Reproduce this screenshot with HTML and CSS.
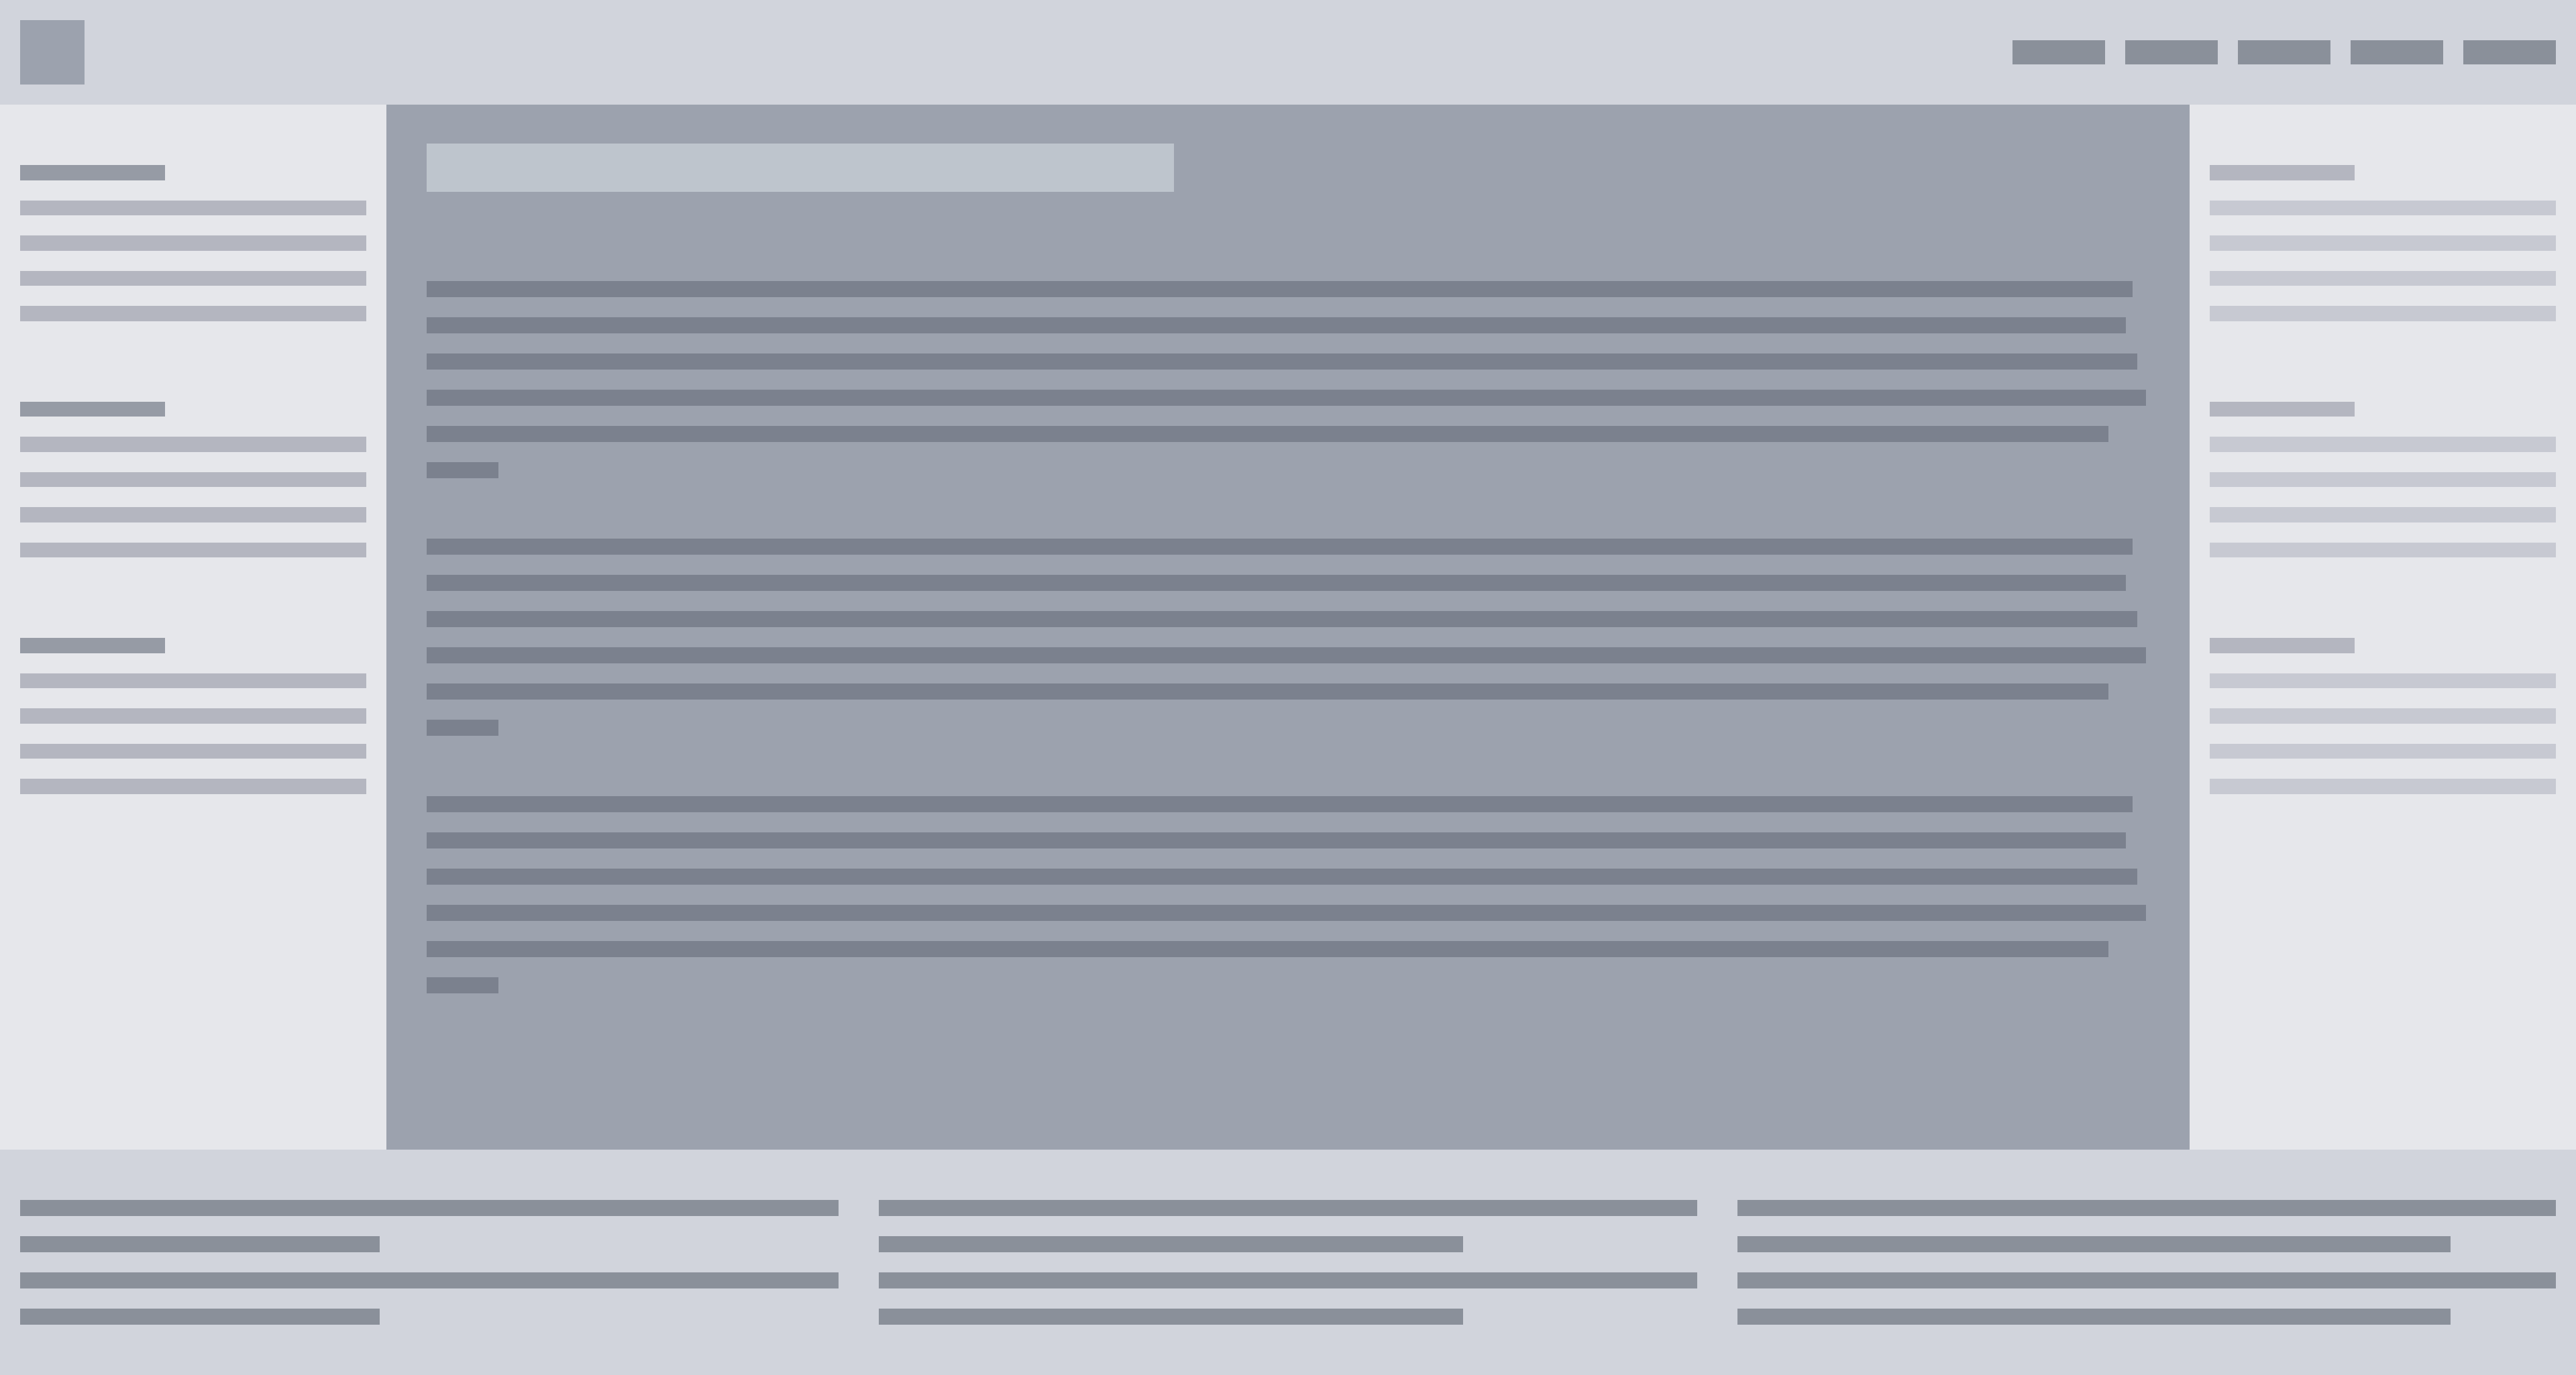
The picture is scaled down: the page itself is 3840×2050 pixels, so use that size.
FILE: index.html
```html
<!DOCTYPE html>
<html lang="en">
<head>
<meta charset="utf-8">
<title>Layout</title>
<link rel="stylesheet" href="styles.css">
</head>
<body>
<div class="page">
  <header class="topbar">
    <div class="logo"></div>
    <nav class="nav">
      <span class="nav-item"></span>
      <span class="nav-item"></span>
      <span class="nav-item"></span>
      <span class="nav-item"></span>
      <span class="nav-item"></span>
    </nav>
  </header>

  <div class="middle">
    <aside class="sidebar sidebar-left">
      <div class="group">
        <div class="group-title"></div>
        <div class="group-line"></div>
        <div class="group-line"></div>
        <div class="group-line"></div>
        <div class="group-line"></div>
      </div>
      <div class="group">
        <div class="group-title"></div>
        <div class="group-line"></div>
        <div class="group-line"></div>
        <div class="group-line"></div>
        <div class="group-line"></div>
      </div>
      <div class="group">
        <div class="group-title"></div>
        <div class="group-line"></div>
        <div class="group-line"></div>
        <div class="group-line"></div>
        <div class="group-line"></div>
      </div>
    </aside>

    <main class="content">
      <div class="content-title"></div>
      <div class="paragraphs">
        <div class="para">
          <div class="para-line"></div>
          <div class="para-line"></div>
          <div class="para-line"></div>
          <div class="para-line"></div>
          <div class="para-line"></div>
          <div class="para-line"></div>
        </div>
        <div class="para">
          <div class="para-line"></div>
          <div class="para-line"></div>
          <div class="para-line"></div>
          <div class="para-line"></div>
          <div class="para-line"></div>
          <div class="para-line"></div>
        </div>
        <div class="para">
          <div class="para-line"></div>
          <div class="para-line"></div>
          <div class="para-line"></div>
          <div class="para-line"></div>
          <div class="para-line"></div>
          <div class="para-line"></div>
        </div>
      </div>
    </main>

    <aside class="sidebar sidebar-right">
      <div class="group">
        <div class="group-title"></div>
        <div class="group-line"></div>
        <div class="group-line"></div>
        <div class="group-line"></div>
        <div class="group-line"></div>
      </div>
      <div class="group">
        <div class="group-title"></div>
        <div class="group-line"></div>
        <div class="group-line"></div>
        <div class="group-line"></div>
        <div class="group-line"></div>
      </div>
      <div class="group">
        <div class="group-title"></div>
        <div class="group-line"></div>
        <div class="group-line"></div>
        <div class="group-line"></div>
        <div class="group-line"></div>
      </div>
    </aside>
  </div>

  <footer class="footer">
    <div class="fcol fcol-1">
      <div class="fline"></div>
      <div class="fline fline-short"></div>
      <div class="fline"></div>
      <div class="fline fline-short"></div>
    </div>
    <div class="fcol fcol-2">
      <div class="fline"></div>
      <div class="fline fline-short"></div>
      <div class="fline"></div>
      <div class="fline fline-short"></div>
    </div>
    <div class="fcol fcol-3">
      <div class="fline"></div>
      <div class="fline fline-short"></div>
      <div class="fline"></div>
      <div class="fline fline-short"></div>
    </div>
  </footer>
</div>
</body>
</html>
```

FILE: styles.css
```css
* {
  box-sizing: border-box;
}

html, body {
  margin: 0;
  padding: 0;
  height: 100%;
  font-family: "Liberation Sans", Arial, sans-serif;
}

.page {
  display: flex;
  flex-direction: column;
  height: 100vh;
  min-height: 2050px;
}

/* Header */
.topbar {
  flex: 0 0 156px;
  height: 156px;
  background: #d1d4dc;
  padding: 30px;
  display: flex;
  align-items: center;
  justify-content: space-between;
}

.logo {
  width: 96px;
  height: 96px;
  background: #9ca2ae;
}

.nav {
  display: flex;
  gap: 30px;
}

.nav-item {
  display: block;
  width: 138px;
  height: 36px;
  background: #8a909a;
}

/* Middle */
.middle {
  flex: 1 1 auto;
  display: flex;
  min-height: 0;
}

.sidebar {
  flex: 0 0 576px;
  width: 576px;
  background: #e6e7eb;
  padding: 90px 30px;
  display: flex;
  flex-direction: column;
  gap: 120px;
}

.group {
  display: flex;
  flex-direction: column;
  gap: 30px;
}

.group-title {
  width: 216px;
  height: 22.5px;
}

.group-line {
  width: 100%;
  height: 22.5px;
}

.sidebar-left .group-title {
  background: #969ba5;
}

.sidebar-left .group-line {
  background: #b4b6c0;
}

.sidebar-right .group-title {
  background: #b4b6c0;
}

.sidebar-right .group-line {
  background: #c7c9d2;
}

.content {
  flex: 1 1 auto;
  background: #9ca2ae;
  padding: 58px 60px;
}

.content-title {
  width: 1114px;
  height: 72px;
  background: #bec5cd;
  margin-bottom: 133px;
}

.paragraphs {
  display: flex;
  flex-direction: column;
  gap: 90px;
}

.para {
  display: flex;
  flex-direction: column;
  gap: 30px;
}

.para-line {
  height: 24px;
  background: #7b818e;
}

.para-line:nth-child(1) { width: 2543px; }
.para-line:nth-child(2) { width: 2533px; }
.para-line:nth-child(3) { width: 2550px; }
.para-line:nth-child(4) { width: 2563px; }
.para-line:nth-child(5) { width: 2507px; }
.para-line:nth-child(6) { width: 107px; }

/* Footer */
.footer {
  flex: 0 0 336px;
  height: 336px;
  background: #d1d4dc;
  padding: 75px 30px;
  display: grid;
  grid-template-columns: repeat(3, 1fr);
  column-gap: 60px;
}

.fcol {
  display: flex;
  flex-direction: column;
  gap: 30px;
}

.fline {
  height: 24px;
  width: 100%;
  background: #8a909a;
}

.fcol-1 .fline-short { width: 536px; }
.fcol-2 .fline-short { width: 871px; }
.fcol-3 .fline-short { width: 1063px; }
```
